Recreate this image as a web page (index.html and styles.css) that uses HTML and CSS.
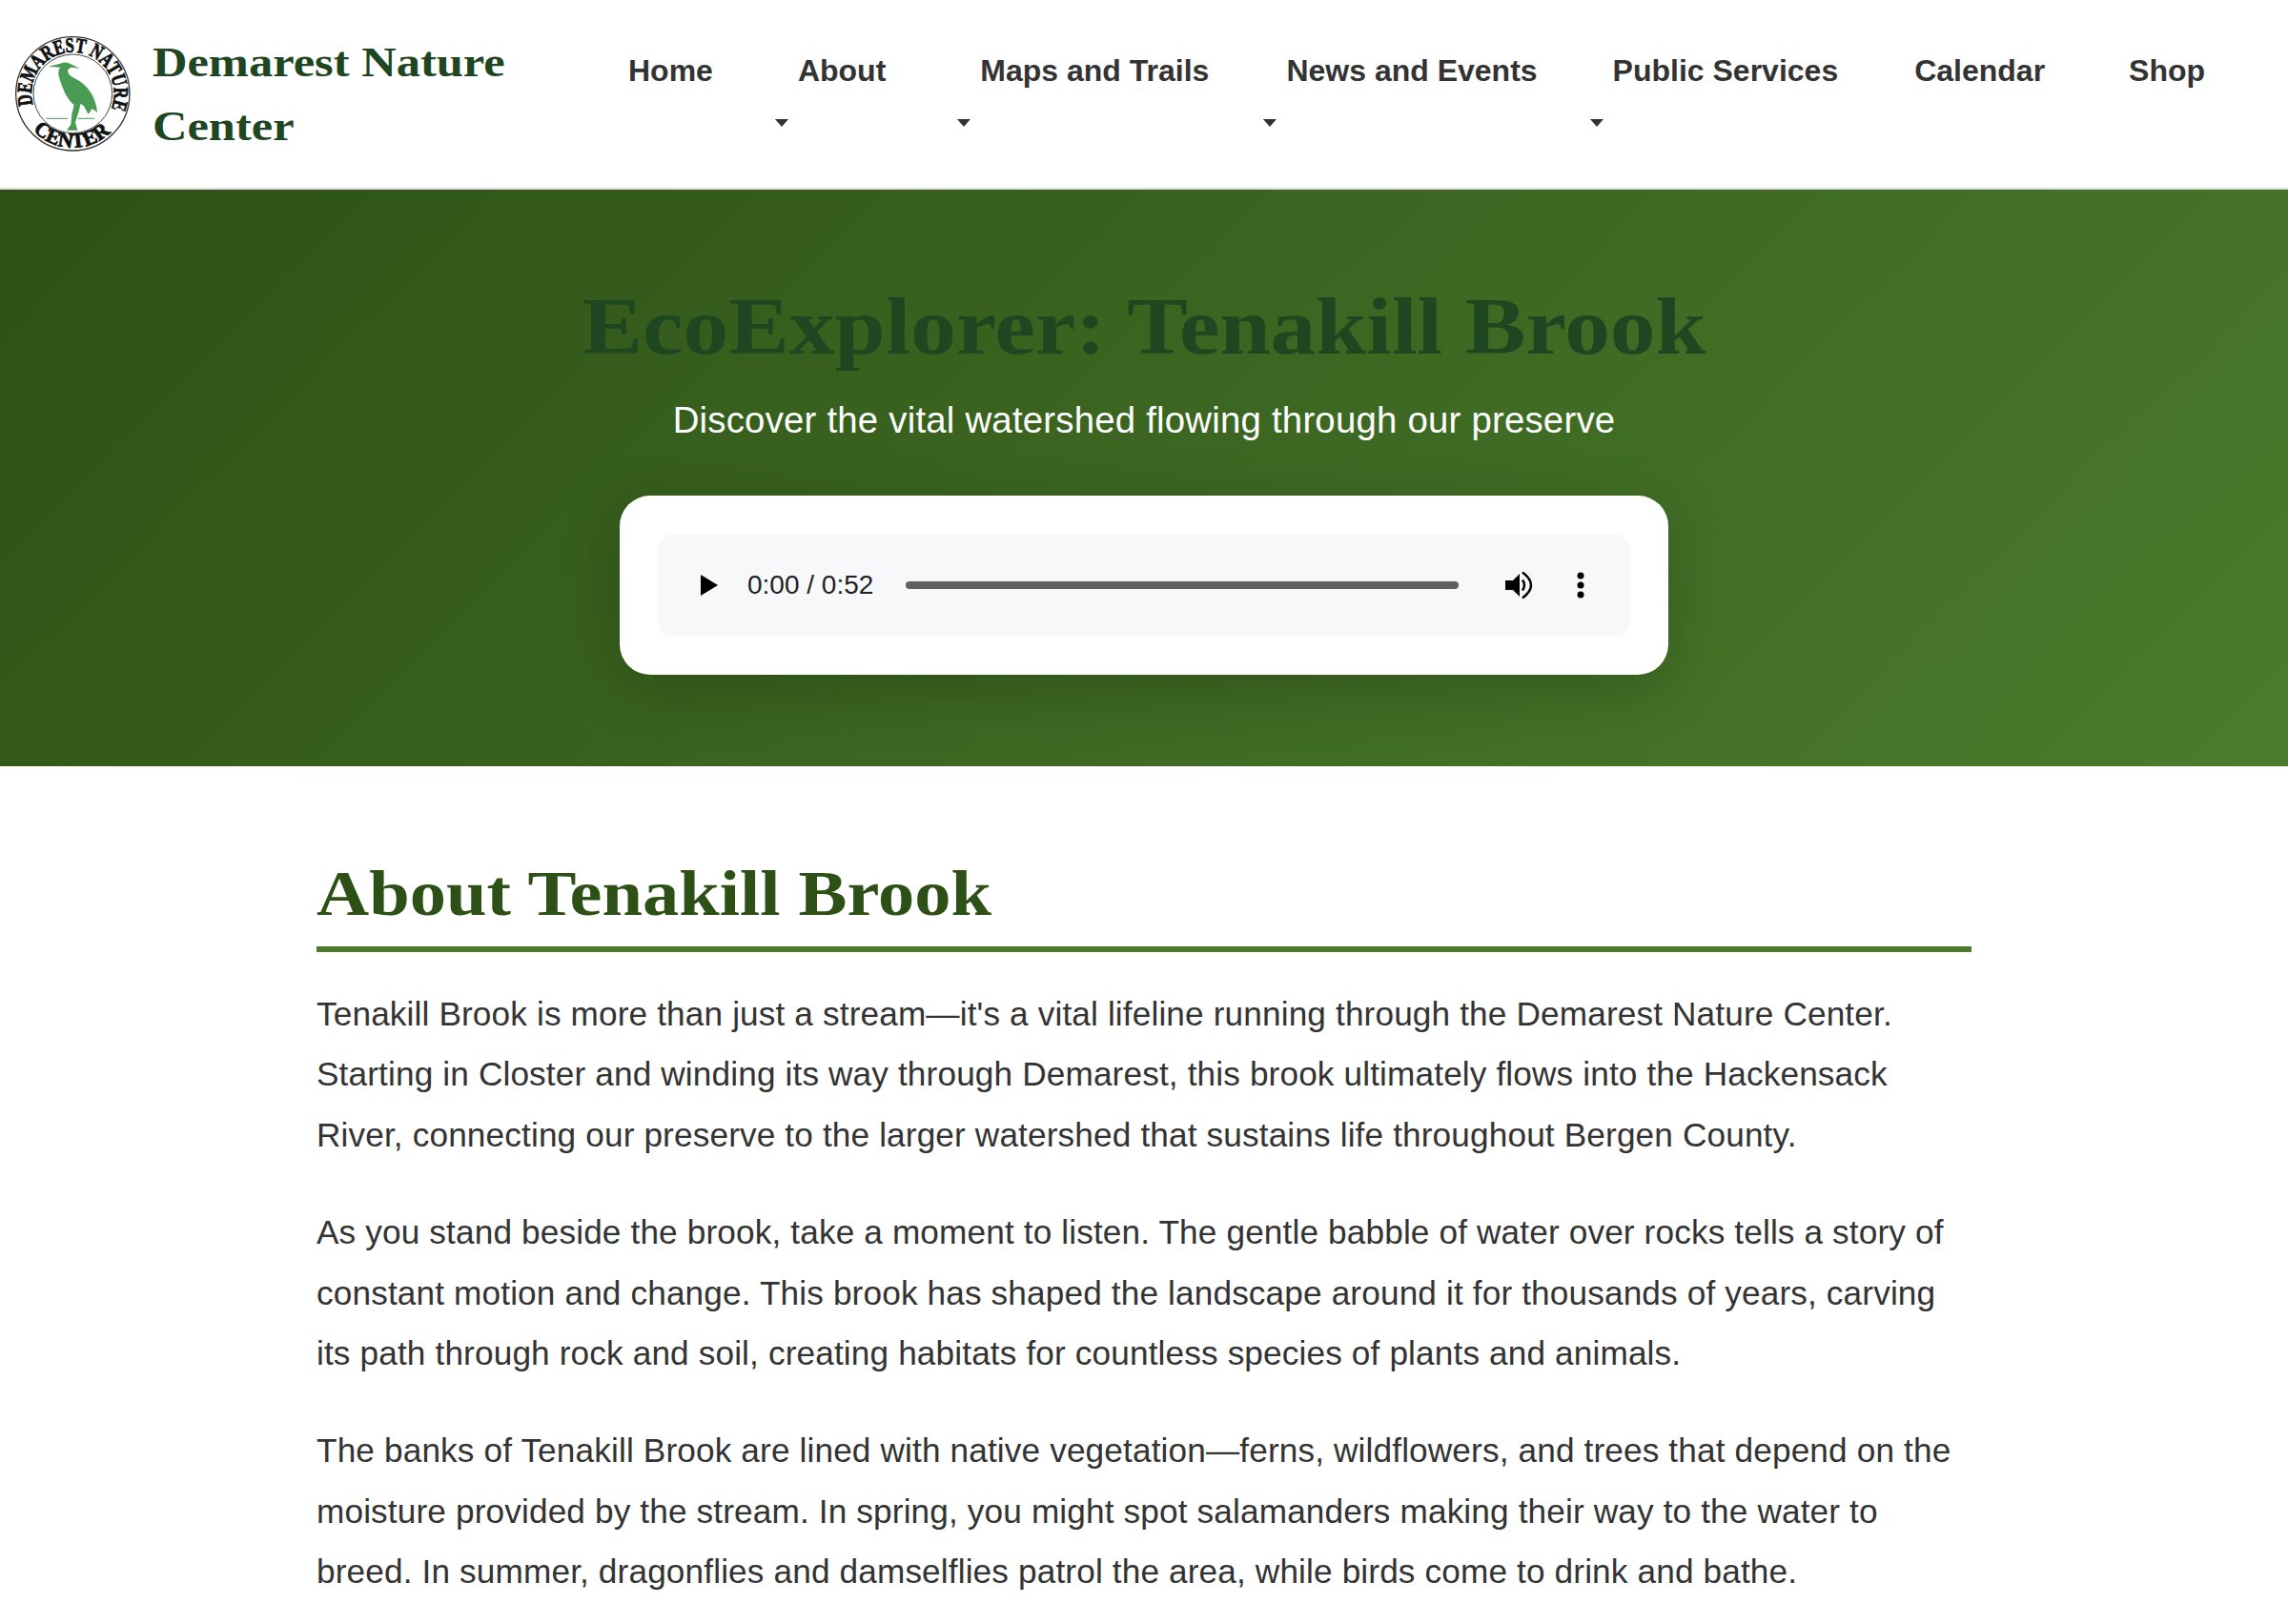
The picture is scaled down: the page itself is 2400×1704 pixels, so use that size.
FILE: index.html
```html
<!DOCTYPE html>
<html lang="en">
<head>
<meta charset="utf-8">
<title>EcoExplorer: Tenakill Brook</title>
<link rel="stylesheet" href="styles.css">
</head>
<body>
<header class="site-header">
  <a class="brand" href="#">
    <svg class="logo" viewBox="0 0 420 420" aria-label="Demarest Nature Center logo">
      <defs>
        <path id="arc-top" d="M74 240 A130 130 0 1 1 319 254"/>
        <path id="arc-bottom" d="M74 320 A170 170 0 0 0 316 328"/>
      </defs>
      <circle class="ring-outer" cx="199" cy="205" r="179"/>
      <circle class="ring-inner" cx="199" cy="205" r="124"/>
      <text class="logo-text" textLength="494" lengthAdjust="spacingAndGlyphs"><textPath href="#arc-top">DEMAREST NATURE</textPath></text>
      <text class="logo-text" textLength="272" lengthAdjust="spacingAndGlyphs"><textPath href="#arc-bottom">CENTER</textPath></text>
      <path class="heron" d="M122 119 L160 110 Q175 103 190 110 L222 126 L197 122 Q186 123 183 132 Q184 146 200 154 Q238 172 258 205 Q274 235 276 264 L260 252 L248 270 L234 244 L224 236 L217 264 L207 295 L214 320 L180 320 L193 302 L196 270 L203 240 Q186 228 174 202 Q162 176 155 150 Q151 130 160 122 Z"/>
      <path class="water" d="M115 283 H183 M215 283 H268"/>
    </svg>
    <span class="brand-name">Demarest Nature Center</span>
  </a>
  <nav class="main-nav">
    <div class="nav-item nav-home"><a href="#">Home</a></div>
    <div class="nav-item nav-about"><a href="#">About</a><i class="caret"></i></div>
    <div class="nav-item nav-maps"><a href="#">Maps and Trails</a><i class="caret"></i></div>
    <div class="nav-item nav-news"><a href="#">News and Events</a><i class="caret"></i></div>
    <div class="nav-item nav-public"><a href="#">Public Services</a><i class="caret"></i></div>
    <div class="nav-item nav-calendar"><a href="#">Calendar</a></div>
    <div class="nav-item nav-shop"><a href="#">Shop</a></div>
  </nav>
</header>

<section class="hero">
  <h1 class="hero-title">EcoExplorer: Tenakill Brook</h1>
  <p class="hero-sub">Discover the vital watershed flowing through our preserve</p>
  <div class="audio-card">
    <div class="audio-player">
      <svg class="icon-play" viewBox="0 0 18 22"><path d="M0 0 L18 11 L0 22 Z"/></svg>
      <span class="audio-time">0:00 / 0:52</span>
      <div class="audio-track"></div>
      <svg class="icon-volume" viewBox="0 0 30 30"><path d="M0 10 H8 L15 3 V27 L8 20 H0 Z"/><path class="wave" d="M18 9.500 Q22 15 18 20.500"/><path class="wave" d="M18 1.500 Q36 15 18 28.500"/></svg>
      <svg class="icon-more" viewBox="0 0 8 28"><circle cx="4" cy="4" r="3.500"/><circle cx="4" cy="14" r="3.500"/><circle cx="4" cy="24" r="3.500"/></svg>
    </div>
  </div>
</section>

<main class="content">
  <h2 class="section-title"><span class="section-title-text">About Tenakill Brook</span></h2>
  <p>Tenakill Brook is more than just a stream—it's a vital lifeline running through the Demarest Nature Center. Starting in Closter and winding its way through Demarest, this brook ultimately flows into the Hackensack River, connecting our preserve to the larger watershed that sustains life throughout Bergen County.</p>
  <p>As you stand beside the brook, take a moment to listen. The gentle babble of water over rocks tells a story of constant motion and change. This brook has shaped the landscape around it for thousands of years, carving its path through rock and soil, creating habitats for countless species of plants and animals.</p>
  <p>The banks of Tenakill Brook are lined with native vegetation—ferns, wildflowers, and trees that depend on the moisture provided by the stream. In spring, you might spot salamanders making their way to the water to breed. In summer, dragonflies and damselflies patrol the area, while birds come to drink and bathe.</p>
</main>
</body>
</html>
```
FILE: styles.css
```css
* { box-sizing: border-box; }
html, body { margin: 0; padding: 0; background: #fff; }
body { font-family: "Liberation Sans", Arial, sans-serif; color: #333; height: 1704px; overflow: hidden; }
a { color: inherit; text-decoration: none; }

.site-header { height: 199px; display: flex; align-items: flex-start; border-bottom: 2px solid #ddd; background: #fff; padding: 30px 0 0 10px; }
.brand { display: flex; align-items: center; width: 520px; flex: none; height: 140px; }
.logo { width: 140px; height: 140px; flex: none; }
.ring-outer { fill: #fff; stroke: #333; stroke-width: 4; }
.ring-inner { fill: #fff; stroke: #444; stroke-width: 3; }
.logo-text { font-family: "Liberation Serif", serif; font-weight: 700; font-size: 66px; fill: #111; stroke: #111; stroke-width: 2.500; }
.heron { fill: #4a9c55; }
.water { stroke: #4a9c55; stroke-width: 3; fill: none; }
.brand-name { font-family: "Liberation Serif", serif; font-weight: 700; font-size: 45px; line-height: 67px; color: #1e4620; margin: -3px 0 0 10px; width: 400px; transform: scaleX(1.122); transform-origin: left center; }

.main-nav { display: flex; align-items: flex-start; margin-left: 129px; padding-top: 20px; font-size: 32px; font-weight: 700; line-height: 48px; color: #333; white-space: nowrap; }
.nav-item { display: flex; flex-direction: column; }
.nav-about { margin-left: 89px; }
.nav-maps { margin-left: 99px; }
.nav-news { margin-left: 81px; }
.nav-public { margin-left: 79px; }
.nav-calendar { margin-left: 80px; }
.nav-shop { margin-left: 88px; }
.caret { display: block; width: 0; height: 0; margin: 27px 0 0 -24px; border-left: 7px solid transparent; border-right: 7px solid transparent; border-top: 8px solid #333; }

.hero { height: 605px; background: linear-gradient(135deg, #2d5016, #4a7c2c); display: flex; flex-direction: column; align-items: center; padding-top: 93px; }
.hero-title { margin: 0; font-family: "Liberation Serif", serif; font-weight: 700; font-size: 85px; line-height: 100px; color: #1e4620; transform: scaleX(1.123); }
.hero-sub { margin: 24px 0 0; font-size: 38.400px; letter-spacing: .2px; line-height: 50px; color: #fff; }
.audio-card { margin-top: 54px; width: 1100px; height: 188px; padding: 40px; background: #fff; border-radius: 32px; box-shadow: 0 16px 64px rgba(0,0,0,.2); }
.audio-player { height: 108px; background: #f7f8fa; border-radius: 16px; display: flex; align-items: center; padding-left: 45px; }
.icon-play { width: 18px; height: 22px; flex: none; }
.audio-time { font-size: 28px; color: #1f1f1f; margin-left: 31px; width: 166px; flex: none; }
.audio-track { width: 580px; height: 8px; border-radius: 4px; background: #5f5f5f; flex: none; }
.icon-volume { width: 30px; height: 30px; margin-left: 49px; flex: none; }
.wave { fill: none; stroke: #000; stroke-width: 2.500; }
.icon-more { width: 8px; height: 28px; margin-left: 45px; flex: none; }

.content { width: 1736px; margin: 0 auto; padding-top: 90px; }
.section-title { margin: 0 0 33px; font-family: "Liberation Serif", serif; font-weight: 700; font-size: 68px; line-height: 86px; padding-bottom: 13px; color: #2d5016; border-bottom: 6px solid #4a7c2c; }
.section-title-text { display: inline-block; transform: scaleX(1.124); transform-origin: left center; }
.content p { margin: 0 0 39px; font-size: 35.200px; letter-spacing: .14px; line-height: 63.400px; color: #333; }
```
